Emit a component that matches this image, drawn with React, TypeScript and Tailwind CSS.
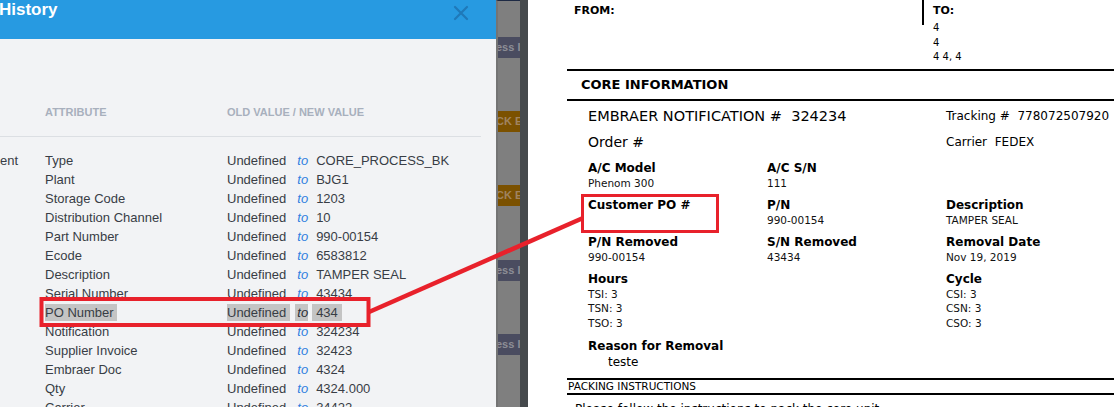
import React from "react";

const rows: [string, string][] = [
  ["Type", "CORE_PROCESS_BK"],
  ["Plant", "BJG1"],
  ["Storage Code", "1203"],
  ["Distribution Channel", "10"],
  ["Part Number", "990-00154"],
  ["Ecode", "6583812"],
  ["Description", "TAMPER SEAL"],
  ["Serial Number", "43434"],
  ["PO Number", "434"],
  ["Notification", "324234"],
  ["Supplier Invoice", "32423"],
  ["Embraer Doc", "4324"],
  ["Qty", "4324.000"],
  ["Carrier", "34422"],
];

function HistoryPanel() {
  return (
    <div className="w-[496px] shrink-0 h-full bg-[#f2f3f5] flex flex-col" style={{ fontFamily: '"Liberation Sans", Arial, sans-serif' }}>
      <div className="h-[39px] bg-[#279ae1] flex items-start justify-between shrink-0">
        <div className="text-white font-bold text-[17px] leading-[20px] -ml-[1px]">History</div>
        <svg width="16" height="16" viewBox="0 0 16 16" className="mt-[5px] mr-[27px]">
          <path d="M2 2 L14 14 M14 2 L2 14" stroke="#1f79b9" strokeWidth="2.2" strokeLinecap="round" />
        </svg>
      </div>
      <div className="pt-[66px]">
        <div className="flex h-[14px] leading-[14px] text-[11px] font-bold text-[#a8b0bd]">
          <div className="w-[45px]" />
          <div className="w-[182px]">ATTRIBUTE</div>
          <div>OLD VALUE / NEW VALUE</div>
        </div>
        <div className="mt-[17px] h-px bg-[#dcdfe3] mr-[15px]" />
        <div className="pt-[14px] text-[13px] text-[#383d45]">
          {rows.map(([attr, val], i) => {
            const hl = attr === "PO Number";
            return (
              <div key={attr} className="flex h-[19px] items-center leading-[19px] whitespace-nowrap">
                <div className="w-[45px]">{i === 0 ? "ent" : ""}</div>
                <div className="w-[182px]">
                  {hl ? (
                    <span className="inline-block bg-[#c4c4c4] leading-[17px] pr-[3px]">{attr}</span>
                  ) : (
                    attr
                  )}
                </div>
                {hl ? (
                  <div className="flex items-center">
                    <span className="inline-block bg-[#c4c4c4] leading-[17px] pr-[4px]">Undefined</span>
                    <span className="inline-block bg-[#c4c4c4] leading-[17px] italic text-[#2b2f36] ml-[5px] pl-[2px]">to</span>
                    <span className="inline-block bg-[#c4c4c4] leading-[17px] ml-[4px] px-[4px]">{val}</span>
                  </div>
                ) : (
                  <div className="flex items-center">
                    <span>Undefined</span>
                    <span className="italic text-[#2f7fe0] ml-[11px]">to</span>
                    <span className="ml-[8px]">{val}</span>
                  </div>
                )}
              </div>
            );
          })}
        </div>
      </div>
    </div>
  );
}

function Strip() {
  const blocks: { top: string; cls: string; txt: string }[] = [
    { top: "mt-[36px]", cls: "bg-[#4a4c60] text-[#8d8e96]", txt: "ess Item" },
    { top: "mt-[53px]", cls: "bg-[#7b5100] text-[#a08460]", txt: "CK EDIT" },
    { top: "mt-[53px]", cls: "bg-[#7b5100] text-[#a08460]", txt: "CK EDIT" },
    { top: "mt-[54px]", cls: "bg-[#4a4c60] text-[#8d8e96]", txt: "ess Item" },
    { top: "mt-[53px]", cls: "bg-[#4a4c60] text-[#8d8e96]", txt: "ess Item" },
  ];
  return (
    <div className="flex shrink-0 h-full">
      <div className="w-[24px] h-full bg-[#7f7f7f] flex flex-col border-t border-[#1e2a44] border-l-2 border-l-[#747474]" style={{ fontFamily: '"Liberation Sans", Arial, sans-serif' }}>
        {blocks.map((b, i) => (
          <div key={i} className={`${b.top} h-[21px] overflow-hidden whitespace-nowrap text-[11px] font-bold leading-[21px] ${b.cls}`}>
            <span className="-ml-[2px]">{b.txt}</span>
          </div>
        ))}
      </div>
      <div className="w-[8px] h-full bg-[#45494c]" />
    </div>
  );
}

function Field({ label, values }: { label: string; values: string[] }) {
  return (
    <div>
      <div className="text-[12px] font-bold leading-[15px] text-black">{label}</div>
      {values.map((v, i) => (
        <div key={i} className="text-[10.5px] leading-[14.5px] text-[#111]">{v}</div>
      ))}
    </div>
  );
}

function Doc() {
  return (
    <div className="flex-1 h-full bg-white pl-[39px] pr-[6px] text-black" style={{ fontFamily: '"DejaVu Sans", Verdana, sans-serif' }}>
      <div className="h-[69px] flex">
        <div className="w-[355px] pl-[7px] pt-[4px] text-[11px] font-bold leading-[14px]">FROM:</div>
        <div>
          <div className="h-[25px] border-l-2 border-black pl-[9px] pt-[4px] text-[11px] font-bold leading-[14px]">TO:</div>
          <div className="-mt-[4px] pl-[11px] text-[10px] leading-[14.5px]">
            <div>4</div>
            <div>4</div>
            <div>4 4, 4</div>
          </div>
        </div>
      </div>
      <div className="h-[2px] bg-black" />
      <div className="h-[28px] flex items-center pl-[14px] text-[13px] font-bold">CORE INFORMATION</div>
      <div className="h-[2px] bg-black" />
      <div className="pl-[21px] pt-[2px]">
        <div className="grid grid-cols-[358px_1fr] leading-[26px]">
          <div className="text-[14.5px]">EMBRAER NOTIFICATION #&nbsp; 324234</div>
          <div className="text-[12px]">Tracking #&nbsp; 778072507920</div>
          <div className="text-[14px]">Order #</div>
          <div className="text-[12px]">Carrier&nbsp; FEDEX</div>
        </div>
        <div className="mt-[5.5px] grid grid-cols-[179px_179px_1fr] gap-y-[7.5px]">
          <Field label="A/C Model" values={["Phenom 300"]} />
          <Field label="A/C S/N" values={["111"]} />
          <div />
          <Field label="Customer PO #" values={[]} />
          <Field label="P/N" values={["990-00154"]} />
          <Field label="Description" values={["TAMPER SEAL"]} />
          <Field label="P/N Removed" values={["990-00154"]} />
          <Field label="S/N Removed" values={["43434"]} />
          <Field label="Removal Date" values={["Nov 19, 2019"]} />
          <Field label="Hours" values={["TSI: 3", "TSN: 3", "TSO: 3"]} />
          <div />
          <Field label="Cycle" values={["CSI: 3", "CSN: 3", "CSO: 3"]} />
        </div>
        <div className="mt-[9px]">
          <div className="text-[12px] font-bold leading-[15px]">Reason for Removal</div>
          <div className="pl-[20px] pt-[1px] text-[12px] leading-[15px]">teste</div>
        </div>
      </div>
      <div className="mt-[8px] h-[2px] bg-black" />
      <div className="h-[13px] leading-[13px] pl-[1px] text-[10.5px]">PACKING INSTRUCTIONS</div>
      <div className="h-[2px] bg-black" />
      <div className="pl-[8px] pt-[7px] text-[12px] leading-[15px]">Please follow the instructions to pack the core unit.</div>
    </div>
  );
}

export default function App() {
  return (
    <div className="relative w-[1120px] h-[407px] overflow-hidden flex bg-white">
      <HistoryPanel />
      <Strip />
      <Doc />
      <svg className="absolute inset-0 pointer-events-none" width="1120" height="407" viewBox="0 0 1120 407">
        <rect x="41.5" y="299" width="327" height="26" fill="none" stroke="#e8212b" strokeWidth="4" />
        <line x1="369" y1="312" x2="583" y2="218" stroke="#e8212b" strokeWidth="4.5" />
        <rect x="582.5" y="195.5" width="135" height="36" fill="none" stroke="#e8212b" strokeWidth="3" />
      </svg>
    </div>
  );
}
